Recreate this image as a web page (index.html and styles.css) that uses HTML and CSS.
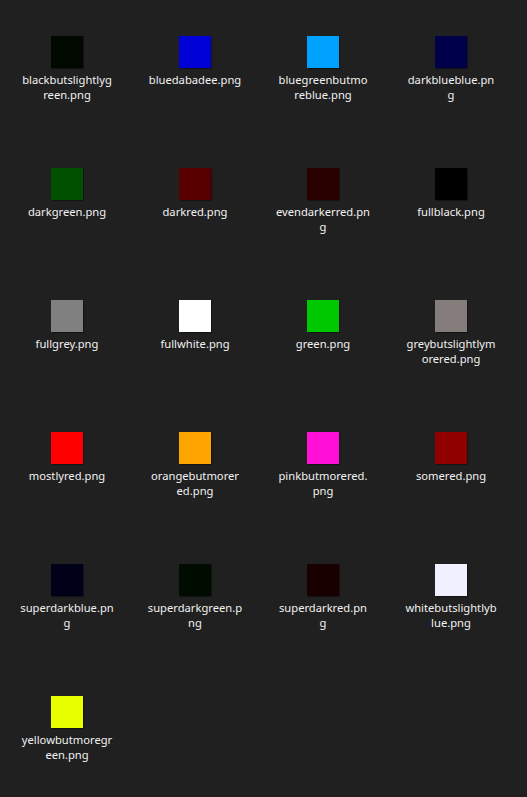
FILE: index.html
```html
<!DOCTYPE html>
<html>
<head>
<meta charset="utf-8">
<link rel="stylesheet" href="styles.css">
</head>
<body>
<div class="grid">
  <div class="item"><div class="icon" style="background:#000800"></div><div class="name">blackbutslightlyg<br>reen.png</div></div>
  <div class="item"><div class="icon" style="background:#0000d8"></div><div class="name">bluedabadee.png</div></div>
  <div class="item"><div class="icon" style="background:#00a2ff"></div><div class="name">bluegreenbutmo<br>reblue.png</div></div>
  <div class="item"><div class="icon" style="background:#00004a"></div><div class="name">darkblueblue.pn<br>g</div></div>

  <div class="item"><div class="icon" style="background:#005000"></div><div class="name">darkgreen.png</div></div>
  <div class="item"><div class="icon" style="background:#580000"></div><div class="name">darkred.png</div></div>
  <div class="item"><div class="icon" style="background:#280000"></div><div class="name">evendarkerred.pn<br>g</div></div>
  <div class="item"><div class="icon" style="background:#000000"></div><div class="name">fullblack.png</div></div>

  <div class="item"><div class="icon" style="background:#808080"></div><div class="name">fullgrey.png</div></div>
  <div class="item"><div class="icon" style="background:#ffffff"></div><div class="name">fullwhite.png</div></div>
  <div class="item"><div class="icon" style="background:#00c800"></div><div class="name">green.png</div></div>
  <div class="item"><div class="icon" style="background:#857c7c"></div><div class="name">greybutslightlym<br>orered.png</div></div>

  <div class="item"><div class="icon" style="background:#ff0000"></div><div class="name">mostlyred.png</div></div>
  <div class="item"><div class="icon" style="background:#ffa500"></div><div class="name">orangebutmorer<br>ed.png</div></div>
  <div class="item"><div class="icon" style="background:#ff10d8"></div><div class="name">pinkbutmorered.<br>png</div></div>
  <div class="item"><div class="icon" style="background:#900000"></div><div class="name">somered.png</div></div>

  <div class="item"><div class="icon" style="background:#000018"></div><div class="name">superdarkblue.pn<br>g</div></div>
  <div class="item"><div class="icon" style="background:#000c00"></div><div class="name">superdarkgreen.p<br>ng</div></div>
  <div class="item"><div class="icon" style="background:#180000"></div><div class="name">superdarkred.pn<br>g</div></div>
  <div class="item"><div class="icon" style="background:#f0f0ff"></div><div class="name">whitebutslightlyb<br>lue.png</div></div>

  <div class="item"><div class="icon" style="background:#e8ff00"></div><div class="name">yellowbutmoregr<br>een.png</div></div>
</div>
</body>
</html>
```

FILE: styles.css
```css
html, body {
  margin: 0;
  padding: 0;
  background: #202020;
  height: 100%;
}
body {
  font-family: "Noto Sans", "Open Sans", sans-serif;
  font-size: 11.2px;
  color: #f2f2f2;
}
.grid {
  display: grid;
  grid-template-columns: repeat(4, 128px);
  grid-auto-rows: 132px;
  padding: 36px 0 0 3px;
}
.item {
  display: flex;
  flex-direction: column;
  align-items: center;
}
.icon {
  width: 32px;
  height: 32px;
  box-shadow: 1px 1px 1px rgba(0,0,0,0.35);
}
.name {
  margin-top: 4px;
  line-height: 15px;
  text-align: center;
  white-space: nowrap;
}
```
